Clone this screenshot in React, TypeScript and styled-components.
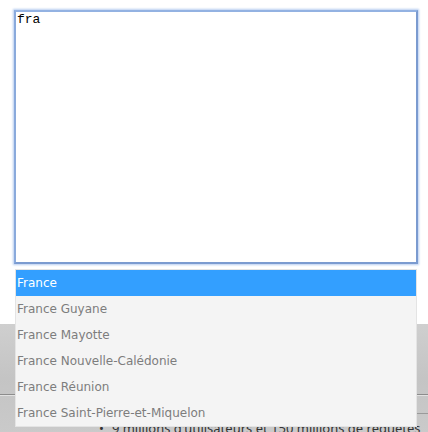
import { useEffect, useRef } from "react";
import styled, { createGlobalStyle } from "styled-components";

const GlobalStyle = createGlobalStyle`
  html, body {
    margin: 0;
    padding: 0;
    background: #ffffff;
    width: 428px;
    height: 432px;
    overflow: hidden;
  }
  * {
    box-sizing: border-box;
  }
`;

const Page = styled.div`
  position: relative;
  width: 428px;
  height: 432px;
  padding-top: 10px;
  overflow: hidden;
`;

const Field = styled.textarea`
  display: block;
  margin-left: 14px;
  width: 404px;
  height: 254px;
  padding: 1px 0 0 1px;
  border: 2px solid #7b9bd0;
  border-top-color: #93b2e2;
  border-left-color: #8aaadc;
  box-shadow: 0 0 2px 1px #b7cdf0;
  outline: none;
  resize: none;
  background: #ffffff;
  font-family: "Liberation Mono", "DejaVu Sans Mono", monospace;
  font-size: 13px;
  line-height: 14px;
  color: #000000;
`;

const Panel = styled.div`
  margin-top: 60px;
  height: 120px;
  background: linear-gradient(180deg, #cfcfcf 0%, #c4c4c4 45%, #cbcbcb 100%);
  display: flex;
  flex-direction: column;
`;

const PanelHead = styled.div`
  height: 71px;
  border-bottom: 1px solid #8c8c8c;
  box-shadow: 0 1px 0 #e2e2e2;
`;

const PanelRow = styled.div`
  height: 19px;
  border-bottom: 1px solid #9a9a9a;
  margin-left: 400px;
`;

const Bullets = styled.ul`
  margin: 0;
  padding: 6px 0 0 99px;
  list-style: none;
`;

const Bullet = styled.li`
  font-family: "Noto Sans", "DejaVu Sans", sans-serif;
  font-size: 13px;
  line-height: 16px;
  color: #333333;
  white-space: nowrap;
  &::before {
    content: "•";
    margin-right: 8px;
  }
`;

const Popup = styled.ul`
  position: absolute;
  left: 15px;
  top: 269px;
  width: 402px;
  margin: 0;
  padding: 0;
  list-style: none;
  background: #f4f4f4;
  border: 1px solid #e4e4e4;
`;

const Option = styled.li<{ $active?: boolean }>`
  height: 26px;
  padding-left: 1px;
  display: flex;
  align-items: center;
  font-family: "DejaVu Sans", "Open Sans", sans-serif;
  font-size: 12px;
  color: ${(p) => (p.$active ? "#ffffff" : "#7d7d7d")};
  background: ${(p) => (p.$active ? "#339fff" : "transparent")};
  white-space: nowrap;
`;

const options = [
  "France",
  "France Guyane",
  "France Mayotte",
  "France Nouvelle-Calédonie",
  "France Réunion",
  "France Saint-Pierre-et-Miquelon",
];

export default function App() {
  const ref = useRef<HTMLTextAreaElement>(null);

  useEffect(() => {
    const el = ref.current;
    if (el) {
      el.focus();
      el.setSelectionRange(3, 3);
    }
  }, []);

  return (
    <>
      <GlobalStyle />
      <Page>
        <Field ref={ref} defaultValue="fra" spellCheck={false} />
        <Panel>
          <PanelHead />
          <PanelRow />
          <Bullets>
            <Bullet>9 millions d'utilisateurs et 150 millions de requetes</Bullet>
          </Bullets>
        </Panel>
        <Popup>
          {options.map((o, i) => (
            <Option key={o} $active={i === 0}>
              {o}
            </Option>
          ))}
        </Popup>
      </Page>
    </>
  );
}
